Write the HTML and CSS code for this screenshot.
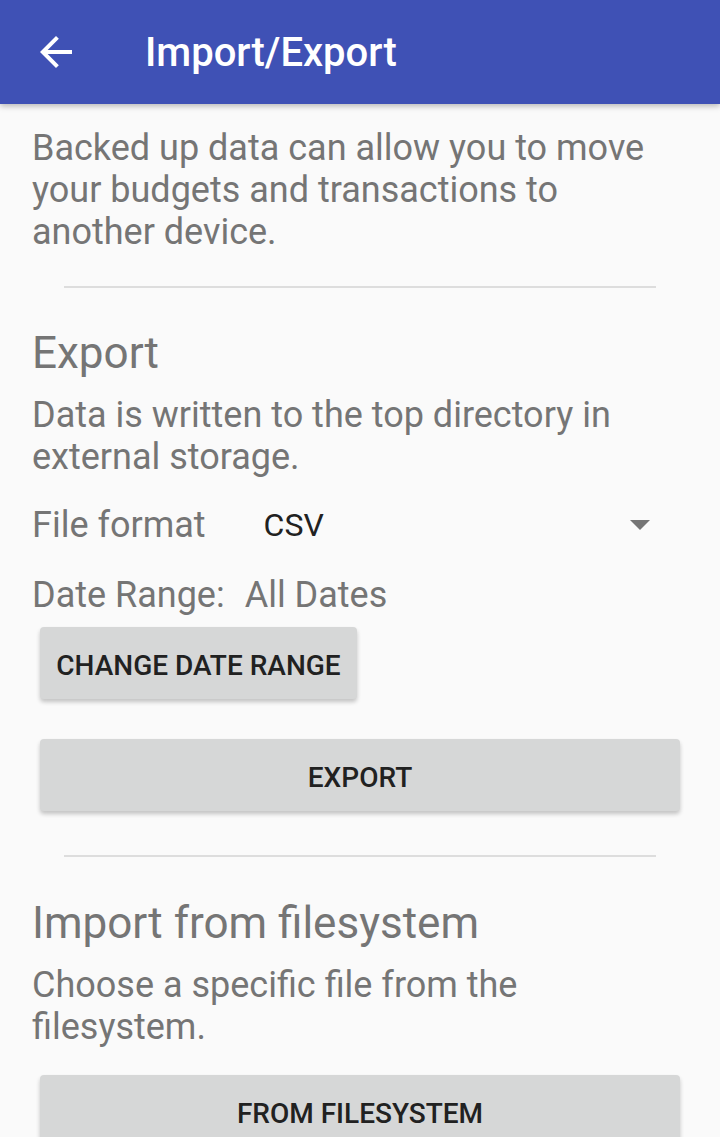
FILE: index.html
```html
<!DOCTYPE html>
<html lang="en">

<head>
    <meta charset="UTF-8">
    <meta name="viewport" content="width=device-width, initial-scale=1.0">
    <title>Import/Export</title>
    <link rel="stylesheet" href="styles.css">
</head>

<body>

    <header class="toolbar">
        <button class="toolbar-back" aria-label="Back">
            <svg width="48" height="48" viewBox="0 0 24 24">
                <path d="M20 11H7.83l5.59-5.59L12 4l-8 8 8 8 1.41-1.41L7.83 13H20v-2z" fill="#fff"/>
            </svg>
        </button>
        <h1 class="toolbar-title">Import/Export</h1>
    </header>

    <main class="content">
        <p class="text intro">Backed up data can allow you to move your budgets and transactions to another device.</p>

        <hr class="divider first-divider">

        <!-- Export -->
        <h2 class="section-title export-title">Export</h2>
        <p class="text export-text">Data is written to the top directory in external storage.</p>

        <div class="row format-row">
            <span class="label">File format</span>
            <div class="spinner">
                <span class="spinner-value">CSV</span>
                <span class="spinner-arrow"></span>
            </div>
        </div>

        <div class="row date-row">
            <span class="label">Date Range:</span>
            <span class="label date-value">All Dates</span>
        </div>

        <button class="btn btn-small">Change date range</button>
        <button class="btn btn-wide export-btn">Export</button>

        <hr class="divider second-divider">

        <!-- Import -->
        <h2 class="section-title import-title">Import from filesystem</h2>
        <p class="text import-text">Choose a specific file from the filesystem.</p>

        <button class="btn btn-wide import-btn">From filesystem</button>
    </main>

</body>

</html>
```

FILE: styles.css
```css
body {
    font-family: Roboto, "Noto Sans", sans-serif;
    margin: 0;
    padding: 0;
    background-color: #FAFAFA;
    color: #757575;
    overflow: hidden;
}

/* Toolbar */
.toolbar {
    display: flex;
    align-items: center;
    height: 104px;
    background-color: #3F51B5;
    box-shadow: 0 2px 6px rgba(0, 0, 0, 0.28);
    position: relative;
}

.toolbar-back {
    display: flex;
    margin-left: 32px;
    padding: 0;
    border: none;
    background: transparent;
    cursor: pointer;
}

.toolbar-title {
    margin: 0 0 0 65px;
    font-size: 40px;
    font-weight: 500;
    color: #fff;
}

/* Contenido */
.content {
    padding: 0 32px;
}

.text {
    margin: 0;
    font-size: 36px;
    line-height: 42px;
}

.intro {
    margin-top: 23px;
}

.divider {
    margin: 0 32px;
    border: none;
    height: 2px;
    background-color: #DDDDDD;
}

.first-divider {
    margin-top: 33px;
}

.second-divider {
    margin-top: 44px;
}

.section-title {
    margin: 0;
    font-size: 44px;
    font-weight: 400;
    line-height: 52px;
}

.export-title {
    margin-top: 39px;
}

.export-text {
    margin-top: 15px;
}

.import-title {
    margin-top: 40px;
}

.import-text {
    margin-top: 15px;
}

/* Filas */
.row {
    display: flex;
    align-items: center;
}

.label {
    font-size: 36px;
    line-height: 42px;
}

.format-row {
    margin-top: 26px;
}

.spinner {
    flex-grow: 1;
    display: flex;
    align-items: center;
    justify-content: space-between;
    margin-left: 58px;
    padding-right: 38px;
}

.spinner-value {
    font-size: 32px;
    color: #212121;
}

.spinner-arrow {
    width: 0;
    height: 0;
    border-left: 10px solid transparent;
    border-right: 10px solid transparent;
    border-top: 10px solid #757575;
}

.date-row {
    margin-top: 28px;
}

.date-value {
    margin-left: 20px;
}

/* Botones */
.btn {
    display: block;
    height: 72px;
    margin-left: 8px;
    padding: 4px 16px 0;
    border: none;
    border-radius: 4px;
    background-color: #D6D7D7;
    color: #212121;
    font-family: Roboto, "Noto Sans", sans-serif;
    font-size: 28px;
    font-weight: 500;
    text-transform: uppercase;
    box-shadow: 0 3px 4px rgba(0, 0, 0, 0.22);
    cursor: pointer;
}

.btn-small {
    width: 317px;
    margin-top: 11px;
}

.btn-wide {
    width: 640px;
}

.export-btn {
    margin-top: 40px;
}

.import-btn {
    margin-top: 27px;
}
```
